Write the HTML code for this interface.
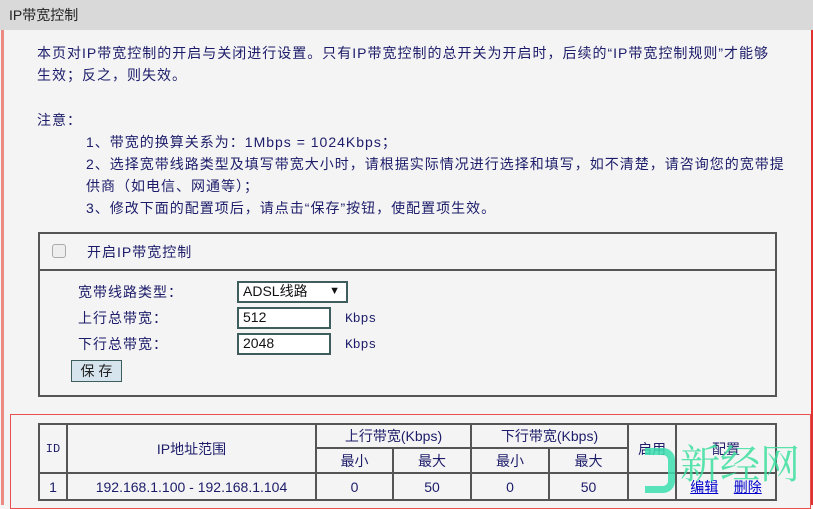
<!DOCTYPE html>
<html><head><meta charset="utf-8"><style>
*{margin:0;padding:0;box-sizing:border-box}
body{width:813px;height:505px;background:#f4f4f4;font-family:"Liberation Sans","Noto Sans CJK SC",sans-serif;font-size:14px;color:#1c1c6a;position:relative;overflow:hidden}
.a{position:absolute;white-space:nowrap;line-height:18px;letter-spacing:1px}
.title{position:absolute;left:0;top:0;width:813px;height:30px;background:#d9d9d9;line-height:30px;padding-left:9px;color:#222}
.lb{position:absolute;left:1px;top:30px;width:3px;height:475px;background:#ea8a82}
.rb{position:absolute;left:811px;top:30px;width:2px;height:475px;background:#e03030}
.box{position:absolute;border:2px solid #555}
.inp{position:absolute;background:#fff;border:2px solid #3e5e5e;font-size:14px;padding-left:4px;line-height:17px;color:#111}
table{position:absolute;left:38px;top:423px;border-collapse:collapse;font-size:14px}
td{border:2px solid #555;text-align:center;color:#1c1c6a;padding:0}
</style></head><body>
<div class="title">IP带宽控制</div>
<div class="lb"></div><div class="rb"></div>
<div class="a" style="left:37px;top:44px">本页对IP带宽控制的开启与关闭进行设置。只有IP带宽控制的总开关为开启时，后续的“IP带宽控制规则”才能够</div>
<div class="a" style="left:37px;top:66px">生效；反之，则失效。</div>
<div class="a" style="left:37px;top:111px">注意：</div>
<div class="a" style="left:86px;top:133px">1、带宽的换算关系为：1Mbps = 1024Kbps；</div>
<div class="a" style="left:86px;top:155px">2、选择宽带线路类型及填写带宽大小时，请根据实际情况进行选择和填写，如不清楚，请咨询您的宽带提</div>
<div class="a" style="left:86px;top:177px">供商（如电信、网通等）；</div>
<div class="a" style="left:86px;top:199px">3、修改下面的配置项后，请点击“保存”按钮，使配置项生效。</div>
<div class="box" style="left:38px;top:232px;width:739px;height:165px"></div>
<div style="position:absolute;left:38px;top:269px;width:739px;height:2px;background:#555"></div>
<div style="position:absolute;left:52px;top:244px;width:14px;height:14px;border:1px solid #aaa;border-radius:3px;background:#eee"></div>
<div class="a" style="left:87px;top:243px">开启IP带宽控制</div>
<div class="a" style="left:78px;top:283px">宽带线路类型：</div>
<div class="a" style="left:78px;top:309px">上行总带宽：</div>
<div class="a" style="left:78px;top:335px">下行总带宽：</div>
<div class="inp" style="left:237px;top:281px;width:111px;height:22px">ADSL线路<span style="position:absolute;right:6px;font-size:11px">▼</span></div>
<div class="inp" style="left:237px;top:307px;width:94px;height:22px">512</div>
<div class="inp" style="left:237px;top:333px;width:94px;height:22px">2048</div>
<div class="a" style="left:345px;top:310px;font-family:'Liberation Mono',monospace;font-size:13px;letter-spacing:0">Kbps</div>
<div class="a" style="left:345px;top:336px;font-family:'Liberation Mono',monospace;font-size:13px;letter-spacing:0">Kbps</div>
<div style="position:absolute;left:71px;top:360px;width:51px;height:22px;background:#d6e4ee;border:1px solid #3e5e5e;text-align:center;line-height:20px;color:#222">保 存</div>
<div style="position:absolute;left:10px;top:414px;width:801px;height:95px;border:1px solid #e85050"></div>
<table>
<tr style="height:24px"><td rowspan="2" style="width:28px;font-family:'Liberation Mono',monospace;font-size:12px">ID</td><td rowspan="2" style="width:249px">IP地址范围</td><td colspan="2">上行带宽(Kbps)</td><td colspan="2">下行带宽(Kbps)</td><td rowspan="2" style="width:48px">启用</td><td rowspan="2" style="width:100px">配置</td></tr>
<tr style="height:25px"><td style="width:77px">最小</td><td style="width:78px">最大</td><td style="width:78px">最小</td><td style="width:79px">最大</td></tr>
<tr style="height:27px"><td>1</td><td>192.168.1.100 - 192.168.1.104</td><td>0</td><td>50</td><td>0</td><td>50</td><td></td><td><span style="color:#00c;text-decoration:underline">编辑</span>&nbsp;&nbsp;&nbsp;&nbsp;<span style="color:#00c;text-decoration:underline">删除</span></td></tr>
</table>
<div class="a" style="left:680px;top:440px;font-size:40px;line-height:44px;color:#3de0a0;opacity:.85;font-family:'Noto Serif CJK SC',serif;letter-spacing:0">新经网</div>
<div style="position:absolute;left:645px;top:448px;width:30px;height:45px;border:7px solid #3de0b0;border-left:none;border-radius:0 12px 12px 0;opacity:.85"></div>
</body></html>
